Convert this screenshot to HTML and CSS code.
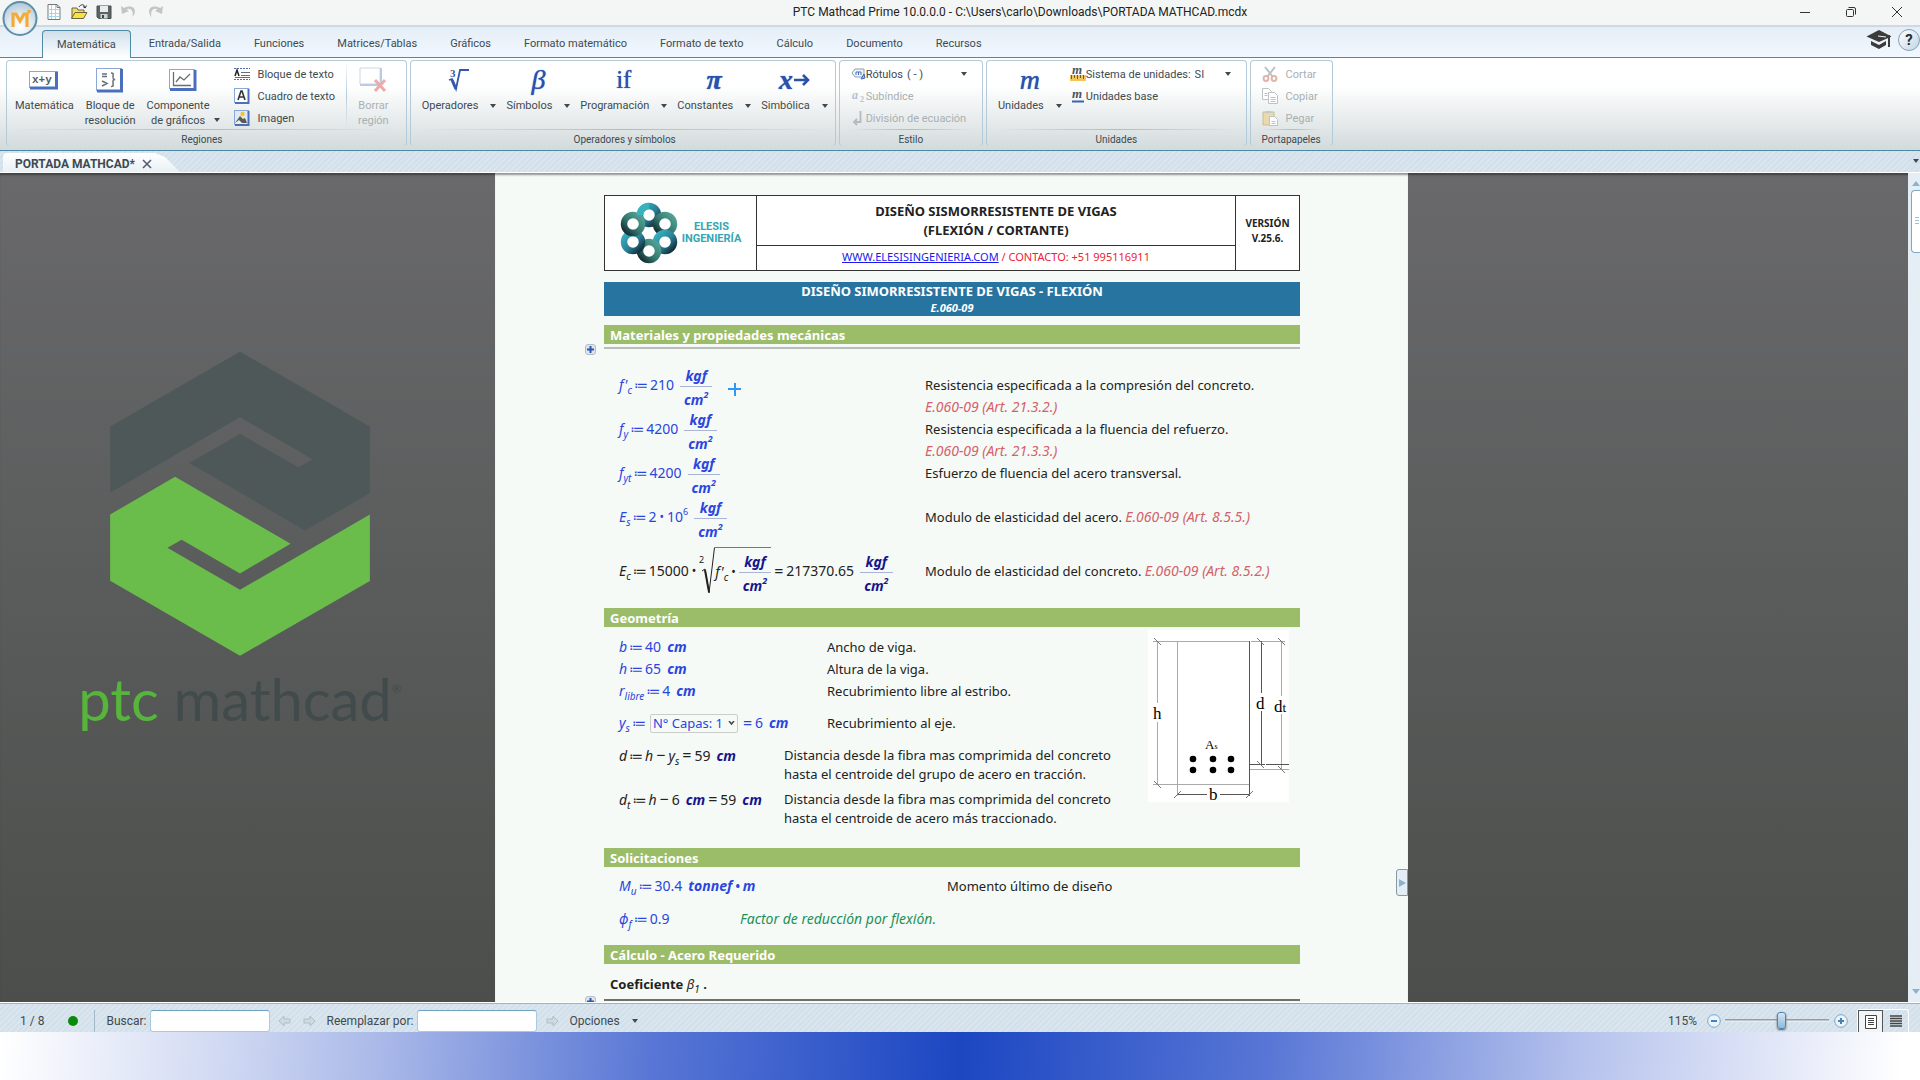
FILE: index.html
```html
<!DOCTYPE html>
<html lang="es">
<head>
  <meta charset="UTF-8">
  <meta name="viewport" content="width=device-width, initial-scale=1.0">
  <title>PTC Mathcad Prime 10.0.0.0</title>
  <link rel="stylesheet" href="styles.css">
</head>
<body>
  <!-- Title bar -->
  <header class="titlebar">
    <button class="orb" aria-label="Mathcad">
      <svg width="36" height="37" viewBox="0 0 36 37">
        <defs>
          <radialGradient id="orbFill" cx="50%" cy="75%" r="80%">
            <stop offset="0" stop-color="#fff"/>
            <stop offset="0.5" stop-color="#dce7ef"/>
            <stop offset="1" stop-color="#a9c2d4"/>
          </radialGradient>
        </defs>
        <circle cx="18" cy="18.500" r="16.500" fill="url(#orbFill)" stroke="#5c8fa9" stroke-width="2"/>
        <path d="M11 27V14h3l4 7 4-7h3v13M27 10v3" fill="none" stroke="#f3ab35" stroke-width="3.200"/>
      </svg>
    </button>
    <div class="quick">
      <button aria-label="Nuevo"><svg width="16" height="18" viewBox="0 0 16 18"><path d="M2 1.500h9l3 3v12H2z" fill="#fff" stroke="#6b7a80"/><path d="M5.500 2v14M9.500 2v14M2 6.500h11M2 10.500h11M2 13.500h11" stroke="#a9d4e6"/><path d="M11 1.500v3h3" fill="none" stroke="#6b7a80"/></svg></button>
      <button aria-label="Abrir"><svg width="18" height="18" viewBox="0 0 18 18"><path d="M2 15V5h5l1 2h6v3" fill="#f4dc6a" stroke="#6b6440"/><path d="M1.500 15.500L5 9.500h12l-3.500 6z" fill="#f8e23c" stroke="#6b6440"/><path d="M9 4c2-3 5-3 6 0M13 3.500l2.200 1.500L16.500 2.500" fill="none" stroke="#333"/></svg></button>
      <button aria-label="Guardar"><svg width="16" height="16" viewBox="0 0 16 16"><path d="M1 2h14v12.500H3L1 13z" fill="#5c6464" stroke="#444c4c"/><path d="M4 2h8v6H4z" fill="#e8ecec"/><path d="M4.500 10h7v4.500h-7z" fill="#cdd4d4"/><path d="M6 11h2v3H6z" fill="#444"/></svg></button>
      <button aria-label="Deshacer" disabled><svg width="18" height="16" viewBox="0 0 18 16"><path d="M1 2l1 8 7-3-2.500-1.500C10 3 14 6 12.500 13 18 7 14-1 4 4z" fill="#c0c6c8"/></svg></button>
      <button aria-label="Rehacer" disabled><svg width="18" height="16" viewBox="0 0 18 16"><path d="M17 2l-1 8-7-3 2.500-1.500C8 3 4 6 5.500 13 0 7 4-1 14 4z" fill="#c0c6c8"/></svg></button>
    </div>
    <h1 class="title">PTC Mathcad Prime 10.0.0.0 - C:\Users\carlo\Downloads\PORTADA MATHCAD.mcdx</h1>
    <div class="window-buttons">
      <button aria-label="Minimizar"><svg width="12" height="12" viewBox="0 0 12 12"><path d="M1 6.500h10" stroke="#333"/></svg></button>
      <button aria-label="Restaurar"><svg width="12" height="12" viewBox="0 0 12 12"><g fill="none" stroke="#333"><rect x="1.500" y="3.500" width="7" height="7" rx="1"/><path d="M3.500 1.500h5.500a1.500 1.500 0 0 1 1.500 1.500v5.500"/></g></svg></button>
      <button aria-label="Cerrar"><svg width="12" height="12" viewBox="0 0 12 12"><path d="M1 1l10 10M11 1L1 11" stroke="#333"/></svg></button>
    </div>
  </header>

  <!-- Ribbon tabs -->
  <nav class="tabs">
    <button class="tab active">Matemática</button>
    <button class="tab">Entrada/Salida</button>
    <button class="tab">Funciones</button>
    <button class="tab">Matrices/Tablas</button>
    <button class="tab">Gráficos</button>
    <button class="tab">Formato matemático</button>
    <button class="tab">Formato de texto</button>
    <button class="tab">Cálculo</button>
    <button class="tab">Documento</button>
    <button class="tab">Recursos</button>
    <div class="help">
      <button aria-label="Aprendizaje"><svg width="26" height="21" viewBox="0 0 26 21"><path d="M13 1l12.500 6.500L13 13 .500 7.500z" fill="#3b3b3b"/><path d="M5 12l8 4 7-4v4l-7 4-8-4z" fill="#3b3b3b"/><path d="M12 7h11v11" fill="none" stroke="#3b3b3b" stroke-width="2"/><path d="M12 7l8 1" stroke="#eef4fa"/></svg></button>
      <button class="help-round" aria-label="Ayuda">?</button>
    </div>
  </nav>

  <!-- Ribbon -->
  <div class="ribbon">
    <section class="group regions">
      <div class="group-body">
        <button class="big">
          <span class="icon"><svg width="32" height="20" viewBox="0 0 32 20"><rect x="1.500" y="1.500" width="28" height="16" fill="#fff" stroke="#8ba6d8"/><path d="M28.500 2v16H2" fill="none" stroke="#4a70bd" stroke-width="3"/><text x="4" y="13" class="svg-mono">x+y</text></svg></span>
          <span>Matemática</span>
        </button>
        <button class="big">
          <span class="icon"><svg width="30" height="26" viewBox="0 0 30 26"><rect x="1.500" y="1.500" width="25" height="22" fill="#fff" stroke="#8ba6d8"/><path d="M26.500 2v22H2" fill="none" stroke="#4a70bd" stroke-width="3"/><path d="M7 7h5M7 9.500h5M7 14l5 2.500L7 19M16 6c3 0 2 1 2 4s0 2 2 2.500c-2 .500-2 0-2 3s1 4-2 4" fill="none" stroke="#666f74" stroke-width="1.500"/></svg></span>
          <span>Bloque de<br>resolución</span>
        </button>
        <button class="big">
          <span class="icon"><svg width="30" height="24" viewBox="0 0 30 24"><rect x="1.500" y="1.500" width="25" height="19" fill="#fff" stroke="#8ba6d8"/><path d="M27 2v19.500H2" fill="none" stroke="#4a70bd" stroke-width="3"/><path d="M5.500 4v13.500H23M8 14l4-5 4 3 6-6" fill="none" stroke="#666f74" stroke-width="1.300"/></svg></span>
          <span class="with-arrow"><span>Componente<br>de gráficos</span><i class="arrow low"></i></span>
        </button>
        <div class="list">
          <button class="small"><svg width="16" height="16" viewBox="0 0 16 16"><path d="M0 2.500h16M0 13.500h16" stroke="#4a70bd" stroke-dasharray="2 1"/><path d="M7 6.500h9M7 9.500h9M1 11.500h15" stroke="#666f74"/><path d="M1 10l2-6 2 6" fill="none" stroke="#222" stroke-width="1.500"/></svg>Bloque de texto</button>
          <button class="small"><svg width="16" height="16" viewBox="0 0 16 16"><rect x=".500" y=".500" width="14" height="14" fill="#fff" stroke="#8ba6d8"/><path d="M14.500 1v14H1" fill="none" stroke="#4a70bd" stroke-width="2"/><path d="M4 12l3-9h1l3 9M5 9h5" fill="none" stroke="#333" stroke-width="1.600"/></svg>Cuadro de texto</button>
          <button class="small"><svg width="16" height="16" viewBox="0 0 16 16"><rect x=".500" y=".500" width="14" height="14" fill="#dfe9f7" stroke="#8ba6d8"/><path d="M14.500 1v14H1" fill="none" stroke="#4a70bd" stroke-width="2"/><path d="M1 13l5-7 3 3 2-1 2 5z" fill="#5c5a4c"/><path d="M1 13l4-3 3 3z" fill="#eee"/><circle cx="8.500" cy="4" r="2.200" fill="#f4c62a"/></svg>Imagen</button>
        </div>
        <div class="separator"></div>
        <button class="big" disabled>
          <span class="icon"><svg width="30" height="28" viewBox="0 0 30 28"><path d="M2 2h20v16H2z" fill="#fff" stroke="#ccd6e6"/><path d="M23 2v17H2" fill="none" stroke="#bccae2" stroke-width="2"/><path d="M17 14l10 11M27 14L17 25" stroke="#eea9a9" stroke-width="3"/></svg></span>
          <span>Borrar<br>región</span>
        </button>
      </div>
      <h2 class="group-title">Regiones</h2>
    </section>

    <section class="group symbols">
      <div class="group-body">
        <button class="big">
          <span class="icon"><svg width="26" height="26" viewBox="0 0 26 26"><path d="M3 13l3-1 4 10L14 3h9" fill="none" stroke="#3159ae" stroke-width="1.800"/><path d="M6 13l4 9" stroke="#3159ae" stroke-width="3"/><text x="4" y="10" class="svg-three">3</text></svg></span>
          <span class="with-arrow">Operadores<i class="arrow"></i></span>
        </button>
        <button class="big"><span class="icon glyph">β</span><span class="with-arrow">Símbolos<i class="arrow"></i></span></button>
        <button class="big"><span class="icon glyph upright">if</span><span class="with-arrow">Programación<i class="arrow"></i></span></button>
        <button class="big"><span class="icon glyph heavy">π</span><span class="with-arrow">Constantes<i class="arrow"></i></span></button>
        <button class="big"><span class="icon glyph heavy">x<svg width="17" height="14" viewBox="0 0 17 14"><path d="M1 7h13M10 2l5 5-5 5" fill="none" stroke="#2a50a8" stroke-width="2.600"/></svg></span><span class="with-arrow">Simbólica<i class="arrow"></i></span></button>
      </div>
      <h2 class="group-title">Operadores y símbolos</h2>
    </section>

    <section class="group">
      <div class="group-body">
        <div class="list tight">
          <label class="small"><svg width="15" height="14" viewBox="0 0 15 14"><path d="M1 6l3-4h9v8H4z" fill="#eef3f8" stroke="#8ca0b8"/><path d="M5 8V5h5v3M7.500 5v3" fill="none" stroke="#4a70bd"/><path d="M10 12l4-1-1-4z" fill="#e9b93d" stroke="#3c66b4"/></svg>Rótulos
            <select class="combo wide"><option>( - )</option></select>
          </label>
          <button class="small" disabled><svg width="15" height="14" viewBox="0 0 15 14"><text x="1" y="10" class="svg-sub">a</text><text x="9" y="13" class="svg-sub2">2</text></svg>Subíndice</button>
          <button class="small" disabled><svg width="15" height="14" viewBox="0 0 15 14"><path d="M9.500 0v11H3M6 8l-3 3 3 3" fill="none" stroke="#b4babd" stroke-width="1.800"/></svg>División de ecuación</button>
        </div>
      </div>
      <h2 class="group-title">Estilo</h2>
    </section>

    <section class="group">
      <div class="group-body">
        <button class="big"><span class="icon glyph">m</span><span class="with-arrow">Unidades<i class="arrow"></i></span></button>
        <div class="list tight">
          <label class="small"><svg width="16" height="15" viewBox="0 0 16 15"><text x="2" y="7" class="svg-m">m</text><path d="M0 8h16v6H0z" fill="#f2c45a"/><path d="M1.500 8v4M4.500 8v3M7.500 8v4M10.500 8v3M13.500 8v4" stroke="#6b5a2a"/></svg>Sistema de unidades:
            <select class="combo"><option>SI</option></select>
          </label>
          <button class="small"><svg width="16" height="14" viewBox="0 0 16 14"><text x="2" y="9" class="svg-m">m</text><path d="M2 12.500h12" stroke="#3a62b4" stroke-width="2"/></svg>Unidades base</button>
        </div>
      </div>
      <h2 class="group-title">Unidades</h2>
    </section>

    <section class="group clipboard">
      <div class="group-body">
        <div class="list">
          <button class="small" disabled><svg width="16" height="16" viewBox="0 0 16 16"><path d="M3 1l8 10M13 1L5 11" stroke="#b9c0c4" stroke-width="2"/><g fill="none" stroke="#e4b3a8" stroke-width="2"><circle cx="4" cy="12.500" r="2.400"/><circle cx="12" cy="12.500" r="2.400"/></g></svg>Cortar</button>
          <button class="small" disabled><svg width="16" height="16" viewBox="0 0 16 16"><g fill="#fff" stroke="#bcc2c5"><path d="M.500 .500h6l3 3v8h-9z"/><path d="M6.500 4.500h6l3 3v8h-9z"/><path d="M8.500 9.500h5M8.500 11.500h5M8.500 13.500h5M2.500 5.500h3M2.500 7.500h3"/></g></svg>Copiar</button>
          <button class="small" disabled><svg width="16" height="16" viewBox="0 0 16 16"><path d="M1 2h11v13H1z" fill="#e9d9ae" stroke="#cbbd97"/><path d="M4 3V1h5v2z" fill="#c3c8ca"/><path d="M7.500 6.500h5l3 3v6h-8z" fill="#fff" stroke="#bcc2c5"/><path d="M9.500 11.500h4M9.500 13.500h4" stroke="#bcc2c5"/></svg>Pegar</button>
        </div>
      </div>
      <h2 class="group-title">Portapapeles</h2>
    </section>
  </div>

  <!-- Open documents -->
  <div class="doc-tabs">
    <div class="doc-tab">PORTADA MATHCAD* <button aria-label="Cerrar documento"><svg width="10" height="10" viewBox="0 0 10 10"><path d="M1 1l8 8M9 1L1 9" stroke="#5b5b70" stroke-width="1.600"/></svg></button></div>
    <i class="arrow list-arrow"></i>
  </div>

  <!-- Workspace -->
  <main class="workspace">
    <div class="backdrop">
      <svg width="260" height="305" viewBox="150 62 780 916">
        <path d="M150 289L540 64l390 225v200L735 601 388 398l152-87 176 101 42-25-218-126L150 488z" fill="#4e5859"/>
        <path d="M150 553l195-113 347 201-152 89-175-101-43 24 218 126 390-226v200L540 977 150 752z" fill="#6bbd4b"/>
      </svg>
      <p class="wordmark"><b>ptc</b> mathcad<sup>®</sup></p>
    </div>

    <article class="sheet">
      <table class="head-table">
        <tr>
          <td rowspan="2" class="head-logo">
            <div class="company">
              <svg width="58" height="62" viewBox="-29 -31 58 62">
                <defs>
                  <linearGradient id="teal" x1="0" y1="0" x2="1" y2="1">
                    <stop offset="0" stop-color="#37b3bf"/>
                    <stop offset="0.550" stop-color="#2a7f97"/>
                    <stop offset="1" stop-color="#10262f"/>
                  </linearGradient>
                  <linearGradient id="green" x1="1" y1="0" x2="0" y2="1">
                    <stop offset="0" stop-color="#56a596"/>
                    <stop offset="0.550" stop-color="#33786f"/>
                    <stop offset="1" stop-color="#10262f"/>
                  </linearGradient>
                </defs>
                <g fill="none" stroke-width="6.500">
                  <circle cx="0" cy="-18" r="9" stroke="url(#teal)"/>
                  <circle cx="16" cy="-9" r="9" stroke="url(#green)"/>
                  <circle cx="16" cy="9" r="9" stroke="url(#teal)"/>
                  <circle cx="0" cy="18" r="9" stroke="url(#green)"/>
                  <circle cx="-16" cy="9" r="9" stroke="url(#teal)"/>
                  <circle cx="-16" cy="-9" r="9" stroke="url(#green)"/>
                  <path d="M-9-18a9 9 0 0 1 9-9" stroke="#37b3bf"/>
                </g>
              </svg>
              <span>ELESIS<br>INGENIERÍA</span>
            </div>
          </td>
          <td class="head-title">DISEÑO SISMORRESISTENTE DE VIGAS<br>(FLEXIÓN / CORTANTE)</td>
          <td rowspan="2" class="head-version">VERSIÓN<br>V.25.6.</td>
        </tr>
        <tr>
          <td class="head-contact"><a href="#">WWW.ELESISINGENIERIA.COM</a> / CONTACTO: +51 995116911</td>
        </tr>
      </table>

      <div class="banner">DISEÑO SIMORRESISTENTE DE VIGAS - FLEXIÓN<em>E.060-09</em></div>

      <section class="block">
        <h3>Materiales y propiedades mecánicas</h3>
        <div class="area"><button class="toggle" aria-label="Contraer área"><svg width="9" height="9" viewBox="0 0 9 9"><path d="M1 4.500h7M4.500 1v7" stroke="#2f56b0" stroke-width="2"/></svg></button></div>
        <div class="row tall materials">
          <div class="math input"><i>f'<sub>c</sub></i><span class="op">≔</span>210<span class="frac"><b>kgf</b><b>cm<sup>2</sup></b></span><span class="cursor"></span></div>
          <p>Resistencia especificada a la compresión del concreto.<br><em>E.060-09 (Art. 21.3.2.)</em></p>
        </div>
        <div class="row tall materials">
          <div class="math input"><i>f<sub>y</sub></i><span class="op">≔</span>4200<span class="frac"><b>kgf</b><b>cm<sup>2</sup></b></span></div>
          <p>Resistencia especificada a la fluencia del refuerzo.<br><em>E.060-09 (Art. 21.3.3.)</em></p>
        </div>
        <div class="row tall materials">
          <div class="math input"><i>f<sub>yt</sub></i><span class="op">≔</span>4200<span class="frac"><b>kgf</b><b>cm<sup>2</sup></b></span></div>
          <p>Esfuerzo de fluencia del acero transversal.</p>
        </div>
        <div class="row tall materials">
          <div class="math input"><i>E<sub>s</sub></i><span class="op">≔</span>2<span class="dot">•</span><span>10<sup>6</sup></span><span class="frac"><b>kgf</b><b>cm<sup>2</sup></b></span></div>
          <p>Modulo de elasticidad del acero. <em>E.060-09 (Art. 8.5.5.)</em></p>
        </div>
        <div class="row taller materials">
          <div class="math"><i>E<sub>c</sub></i><span class="op">≔</span>15000<span class="dot">•</span><span class="root"><svg width="16" height="48" viewBox="0 0 16 48"><path d="M3 24l3-2 4 24L15.500 .500" fill="none" stroke="#222"/><path d="M6 23l4 22" stroke="#222" stroke-width="2"/><text x="0" y="16" class="svg-index">2</text></svg><span class="radicand"><i>f'<sub>c</sub></i><span class="dot">•</span><span class="frac flush"><b>kgf</b><b>cm<sup>2</sup></b></span></span></span><span class="op eq">=</span>217370.65<span class="frac"><b>kgf</b><b>cm<sup>2</sup></b></span></div>
          <p>Modulo de elasticidad del concreto. <em>E.060-09 (Art. 8.5.2.)</em></p>
        </div>
      </section>

      <section class="block geometry">
        <h3>Geometría</h3>
        <div class="split">
          <div class="rows">
            <div class="row geo"><div class="math input"><i>b</i><span class="op">≔</span>40<b class="unit">cm</b></div><p>Ancho de viga.</p></div>
            <div class="row geo"><div class="math input"><i>h</i><span class="op">≔</span>65<b class="unit">cm</b></div><p>Altura de la viga.</p></div>
            <div class="row geo"><div class="math input"><i>r<sub>libre</sub></i><span class="op">≔</span>4<b class="unit">cm</b></div><p>Recubrimiento libre al estribo.</p></div>
            <div class="row geo middle">
              <div class="math input"><i>y<sub>s</sub></i><span class="op">≔</span><select class="layers" aria-label="Capas"><option>N° Capas: 1</option></select><span class="op eq">=</span>6<b class="unit">cm</b></div>
              <p>Recubrimiento al eje.</p>
            </div>
            <div class="row dist"><div class="math"><i>d</i><span class="op">≔</span><i>h</i><span class="op eq">−</span><i>y<sub>s</sub></i><span class="op eq">=</span>59<b class="unit">cm</b></div><p>Distancia desde la fibra mas comprimida del concreto<br>hasta el centroide del grupo de acero en tracción.</p></div>
            <div class="row dist"><div class="math"><i>d<sub>t</sub></i><span class="op">≔</span><i>h</i><span class="op eq">−</span>6<b class="unit">cm</b><span class="op eq">=</span>59<b class="unit">cm</b></div><p>Distancia desde la fibra mas comprimida del concreto<br>hasta el centroide de acero más traccionado.</p></div>
          </div>
          <svg class="beam" width="141" height="172" viewBox="0 0 141 172">
            <path fill="#fff" d="M0 0h141v172H0z"/>
            <g fill="none" stroke="#aaa">
              <path d="M9.500 11v62M9.500 92v62M5 11.500h24M5 154.500h24M29.500 11.500v154M29 11.500h72M29 154.500h72"/>
              <path d="M103 11.500h34M133.500 11v55M133.500 84v56M102 139.500h39"/>
              <path stroke="#555" d="M101.500 11v155M113.500 11v52M113.500 81v54M102 134.500h15M118 134.500h23M29 164.500h30M72 164.500h29" />
              <path stroke="#777" d="M6 8l7 7M6 151l7 7M109 8l7 7M130 8l7 7M109 131l7 7M130 136l7 7M26 168l7-7M98 168l7-7"/>
            </g>
            <g>
              <circle cx="45" cy="129" r="3.300"/><circle cx="65" cy="129" r="3.300"/><circle cx="83" cy="129" r="3.300"/>
              <circle cx="45" cy="140" r="3.300"/><circle cx="65" cy="140" r="3.300"/><circle cx="83" cy="140" r="3.300"/>
            </g>
            <text x="5" y="89" class="dim">h</text>
            <text x="108" y="79" class="dim">d</text>
            <text x="126" y="82" class="dim">d<tspan class="dim-sub">t</tspan></text>
            <text x="57" y="119" class="bars">A<tspan class="bars-sub">s</tspan></text>
            <text x="61" y="170" class="dim">b</text>
          </svg>
        </div>
      </section>

      <section class="block loads">
        <h3>Solicitaciones</h3>
        <div class="row moment"><div class="math input"><i>M<sub>u</sub></i><span class="op">≔</span>30.4<b class="unit">tonnef<span class="dot">•</span>m</b></div><p>Momento último de diseño</p></div>
        <div class="row factor"><div class="math input"><i>ϕ<sub>f</sub></i><span class="op">≔</span>0.9</div><p class="note">Factor de reducción por flexión.</p></div>
      </section>

      <section class="block">
        <h3>Cálculo - Acero Requerido</h3>
        <p class="coef"><b>Coeficiente</b> <i>β<sub>1</sub></i> <b>.</b></p>
        <div class="area dark"><button class="toggle" aria-label="Contraer área"><svg width="9" height="9" viewBox="0 0 9 9"><path d="M1 4.500h7M4.500 1v7" stroke="#2f56b0" stroke-width="2"/></svg></button></div>
      </section>

      <button class="drawer" aria-label="Mostrar borrador"><svg width="7" height="8" viewBox="0 0 7 8"><path d="M0 0l7 4-7 4z" fill="#8ab4cc"/></svg></button>
    </article>

    <div class="margin"></div>
    <div class="scrollbar">
      <svg width="8" height="5" viewBox="0 0 8 5"><path d="M0 5l4-5 4 5z" fill="#8ab4cc"/></svg>
      <div class="thumb"></div>
      <svg width="8" height="5" viewBox="0 0 8 5"><path d="M0 0l4 5 4-5z" fill="#8ab4cc"/></svg>
    </div>
  </main>

  <!-- Status bar -->
  <footer class="statusbar">
    <span class="pages">1 / 8</span>
    <span class="status-dot"></span>
    <span class="bar-line"></span>
    <label for="find">Buscar:</label>
    <input type="text" id="find">
    <button disabled aria-label="Anterior"><svg width="14" height="12" viewBox="0 0 14 12"><path d="M1 6l5-5v3h6v4H6v3z" fill="#d0d9df" stroke="#b3bec5"/></svg></button>
    <button disabled aria-label="Siguiente"><svg width="14" height="12" viewBox="0 0 14 12"><path d="M13 6L8 1v3H2v4h6v3z" fill="#d0d9df" stroke="#b3bec5"/></svg></button>
    <label for="replace">Reemplazar por:</label>
    <input type="text" id="replace">
    <button disabled aria-label="Reemplazar"><svg width="14" height="12" viewBox="0 0 14 12"><path d="M13 6L8 1v3H2v4h6v3z" fill="#d0d9df" stroke="#b3bec5"/></svg></button>
    <button class="options with-arrow">Opciones<i class="arrow"></i></button>
    <div class="zoom">
      <label for="zoom">115%</label>
      <button class="round" aria-label="Alejar"><svg width="14" height="14" viewBox="0 0 14 14"><circle cx="7" cy="7" r="6.300" fill="#eaf3fa" stroke="#7da7c8"/><path d="M4 7h6" stroke="#4682b4" stroke-width="2"/></svg></button>
      <input type="range" id="zoom" min="0" max="100" value="55">
      <button class="round" aria-label="Acercar"><svg width="14" height="14" viewBox="0 0 14 14"><circle cx="7" cy="7" r="6.300" fill="#eaf3fa" stroke="#7da7c8"/><path d="M4 7h6M7 4v6" stroke="#4682b4" stroke-width="2"/></svg></button>
      <div class="views">
        <button class="on" aria-label="Vista de página"><svg width="12" height="14" viewBox="0 0 12 14"><path d="M.500 .500h11v13H.500z" fill="#fff" stroke="#444"/><path d="M3 3.500h6M3 5.500h6M3 7.500h6M3 9.500h6" stroke="#444"/></svg></button>
        <button aria-label="Vista de borrador"><svg width="12" height="12" viewBox="0 0 12 12"><path d="M0 1h12M0 3.500h12M0 6h12M0 8.500h12M0 11h12" stroke="#444" stroke-width="1.400"/></svg></button>
      </div>
    </div>
  </footer>
  <div class="desktop"></div>
</body>
</html>
```
FILE: styles.css
```css
* {
  box-sizing: border-box;
}

body {
  margin: 0;
  height: 100vh;
  display: flex;
  flex-direction: column;
  overflow: hidden;
  font-family: Roboto, "Open Sans", sans-serif;
  font-size: 11px;
  color: #3d4a50;
  background: #fff;
}

button {
  font: inherit;
  color: inherit;
  background: none;
  border: 0;
  padding: 0;
}

svg {
  flex: none;
  display: block;
  overflow: visible;
}

h1, h2, h3, p {
  margin: 0;
  font-weight: normal;
}

/* Title bar */
.titlebar {
  display: flex;
  align-items: center;
  height: 27px;
  padding-bottom: 2px;
  background: #f4f6f5;
  border-bottom: 2px solid #cfd9e4;
}

.orb {
  align-self: flex-start;
  margin: 0 10px 0 2px;
  height: 25px;
  z-index: 2;
}

.quick {
  display: flex;
  align-items: center;
  gap: 8px;
  margin-left: -2px;
}

.title {
  flex: 1;
  padding-left: 94px;
  text-align: center;
  font-size: 12px;
  color: #222;
}

.window-buttons {
  display: flex;
}

.window-buttons button {
  width: 46px;
  display: flex;
  justify-content: center;
}

/* Tabs */
.tabs {
  display: flex;
  align-items: flex-end;
  gap: 3px;
  height: 31px;
  padding-left: 42px;
  background: linear-gradient(#e5edf6, #f1f8ff);
  border-bottom: 1px solid #4f89a5;
}

.tab {
  height: 28px;
  padding: 0 14px;
  border: 1px solid transparent;
}

.tab.active {
  margin-bottom: -1px;
  border-color: #4f89a5;
  border-bottom: 0;
  border-radius: 4px 4px 0 0;
  background: linear-gradient(#cfdfea, #fff);
}

.help {
  margin-left: auto;
  align-self: center;
  display: flex;
  align-items: center;
  gap: 6px;
  padding-bottom: 5px;
}

.help-round {
  width: 22px;
  height: 22px;
  border: 1px solid #7fa3ba;
  border-radius: 50%;
  background: linear-gradient(135deg, #fff, #c3d5e2);
  font-weight: bold;
  font-size: 15px;
  color: #22303a;
}

/* Ribbon */
.ribbon {
  display: flex;
  gap: 3px;
  height: 93px;
  padding: 2px 6px 4px;
  background: linear-gradient(#fff 30%, #d2dadb);
  border-bottom: 1px solid #4f89a5;
}

.group {
  display: flex;
  flex-direction: column;
  padding: 0 11px;
  border: 1px solid #b4cad9;
  border-bottom: 0;
  border-radius: 4px;
}

.group.regions {
  padding: 0 17px 0 8px;
}

.group.symbols {
  padding: 0 7px 0 11px;
}

.group-body {
  flex: 1;
  display: flex;
  gap: 8px;
}

.regions .group-body {
  gap: 11px;
}

.regions .list {
  margin-left: 3px;
}

.symbols .group-body {
  gap: 10px;
}

.group-title {
  padding-top: 3px;
  line-height: 13px;
  font-size: 10px;
  text-align: center;
  border-top: 1px solid #fff;
  border-image: linear-gradient(90deg, transparent, #b3bbbe, transparent) 1;
}

.big {
  display: flex;
  flex-direction: column;
  align-items: center;
  line-height: 15px;
}

.icon {
  height: 37px;
  display: flex;
  align-items: center;
}

.glyph {
  font-family: "Liberation Serif", serif;
  font-style: italic;
  font-size: 28px;
  color: #2a52ac;
  text-shadow: 0 0 1px #2a52ac;
}

.glyph.heavy {
  font-weight: bold;
}

.glyph.upright {
  font-style: normal;
  font-size: 25px;
}

.with-arrow {
  display: flex;
  align-items: center;
  gap: 12px;
}

.arrow {
  border: 3px solid transparent;
  border-top: 4px solid #3d4a50;
  border-bottom: 0;
}

.arrow.low {
  margin: 14px 0 0 -8px;
}

.list {
  display: flex;
  flex-direction: column;
  padding-top: 2px;
}

.small {
  display: flex;
  align-items: center;
  gap: 8px;
  height: 22px;
}

.tight .small {
  gap: 0;
}

:disabled {
  color: #a9b0b3;
}

.separator {
  width: 1px;
  background: linear-gradient(transparent, #b4cad9, transparent);
}

.combo {
  appearance: none;
  width: 36px;
  margin: 0 4px;
  padding: 0;
  border: 0;
  font: inherit;
  color: inherit;
  background: url("data:image/svg+xml,%3Csvg xmlns='http://www.w3.org/2000/svg' width='6' height='4'%3E%3Cpath d='M0 0h6L3 4z' fill='%233d4a50'/%3E%3C/svg%3E") no-repeat 100% 50%;
}

.combo.wide {
  width: 60px;
}

.svg-mono { font: bold 11px "Liberation Mono", monospace; fill: #555e63; }
.svg-three { font: bold 11px "Liberation Serif", serif; fill: #3159ae; }
.svg-sub { font: italic bold 12px "Liberation Serif", serif; fill: #b5c0d2; }
.svg-sub2 { font: bold 8px "Liberation Serif", serif; fill: #b5c0d2; }
.svg-m { font: italic bold 13px "Liberation Serif", serif; fill: #4a5458; }
.svg-index { font: 9px "Noto Sans", sans-serif; fill: #222; }

/* Document tabs */
.doc-tabs {
  display: flex;
  align-items: flex-end;
  justify-content: space-between;
  height: 22px;
  padding-left: 3px;
  border-bottom: 1px solid #fff;
  background: repeating-linear-gradient(135deg, #d3e0ea 0 2px, #dae6ef 2px 4px);
}

.doc-tab {
  display: flex;
  align-items: center;
  gap: 7px;
  height: 19px;
  padding: 2px 28px 0 12px;
  font-weight: bold;
  font-size: 12px;
  background: linear-gradient(#fff, #e9f0f5);
  border-radius: 4px 0 0 0;
  clip-path: polygon(0 0, 152px 0, 162px 4px, 100% 100%, 0 100%);
}

.list-arrow {
  margin: 0 1px 9px 0;
}

/* Workspace */
.workspace {
  flex: 1;
  min-height: 0;
  display: flex;
  background: linear-gradient(#69696b, #4b4e4b);
  box-shadow: inset 0 3px 2px -1px rgba(40, 40, 40, 0.6);
}

.backdrop {
  flex: 1;
  display: flex;
  flex-direction: column;
  align-items: center;
  padding: 178px 15px 0 0;
}

.wordmark {
  margin-top: 8px;
  font-family: Lato, sans-serif;
  font-size: 58px;
  line-height: 70px;
  color: #424b4c;
  white-space: nowrap;
}

.wordmark b {
  font-weight: normal;
  color: #57b53b;
}

.wordmark sup {
  font-size: 12px;
  vertical-align: 28px;
  line-height: 0;
}

.margin {
  flex: 1;
  padding-left: 15px;
}

.scrollbar {
  display: flex;
  flex-direction: column;
  align-items: center;
  width: 12px;
  padding: 8px 0 8px 3px;
  background: #e6eef5;
}

.thumb {
  align-self: stretch;
  height: 63px;
  margin: 4px 0 auto;
  border: 1px solid #7fa9c2;
  border-right: 0;
  border-radius: 4px 0 0 4px;
  background: repeating-linear-gradient(#9cc3d6 0 1px, #fff 1px 3px) no-repeat 3px 50% / 4px 9px #fff;
}

/* Worksheet */
.sheet {
  flex: 0 1 913px;
  position: relative;
  margin-right: 5px;
  padding: 22px 108px 0 109px;
  overflow: hidden;
  background: #f5faf6;
  box-shadow: inset 0 3px 2px -1px rgba(80, 80, 80, 0.6);
  font-family: "Noto Sans", "DejaVu Sans", sans-serif;
  font-size: 13px;
  line-height: 22px;
  color: #222;
}

.head-table {
  width: 100%;
  height: 76px;
  border-collapse: collapse;
  background: #fff;
  text-align: center;
  font-weight: bold;
}

.head-table td {
  padding: 0;
  border: 1px solid #333;
}

.head-logo {
  width: 152px;
}

.company {
  display: flex;
  align-items: center;
  justify-content: center;
  gap: 4px;
  line-height: 12px;
  font-family: Roboto, sans-serif;
  font-size: 11px;
  color: #35a6b4;
}

.head-title {
  line-height: 19px;
}

.head-table .head-version {
  width: 64px;
  padding-bottom: 4px;
  font-size: 10px;
  line-height: 15px;
}

.head-table .head-contact {
  height: 25px;
  padding-bottom: 3px;
  font-size: 11px;
  line-height: 20px;
  font-weight: normal;
  color: #ee2233;
}

.head-contact a {
  color: #1a1aee;
}

.banner {
  margin-top: 11px;
  height: 34px;
  background: #2874a1;
  color: #fff;
  font-weight: bold;
  line-height: 19px;
  text-align: center;
}

.banner em {
  display: block;
  font-size: 11px;
  line-height: 14px;
}

.block {
  margin-top: 9px;
}

.block h3 {
  height: 19px;
  padding-left: 6px;
  background: #9bbd69;
  color: #fff;
  font-size: 13px;
  font-weight: bold;
  line-height: 20px;
}

.area {
  height: 2px;
  margin: 3px 0 14px;
  background: #b9bdba;
}

.area.dark {
  margin-top: 4px;
  background: #6d716e;
}

.toggle {
  position: absolute;
  left: 90px;
  margin-top: -3px;
  width: 11px;
  height: 11px;
  border: 1px solid #b5bdc8;
  border-radius: 3px;
  background: #dfe4ee;
}

.row {
  display: grid;
  height: 22px;
  padding-left: 15px;
}

.row p {
  white-space: nowrap;
}

.row em {
  font-size: 14px;
  color: #d4606a;
}

.materials { grid-template-columns: 306px 1fr; }
.geo { grid-template-columns: 208px 1fr; }
.dist { grid-template-columns: 165px 1fr; }
.moment { grid-template-columns: 328px 1fr; }
.factor { grid-template-columns: 121px 1fr; }

.row.tall {
  height: 44px;
  grid-template-rows: 44px;
  align-items: center;
}

.row.tall p {
  align-self: start;
  padding-top: 11px;
}

.row.taller {
  height: 62px;
}

.row.taller p {
  padding-top: 21px;
}

.row.taller .math {
  padding-top: 2px;
}

.row.middle {
  height: 42px;
  align-items: center;
}

.row.dist {
  height: 44px;
  padding-top: 2px;
  line-height: 19px;
}

.dist .math {
  height: 19px;
}

.math {
  display: flex;
  align-items: center;
  font-size: 14px;
  white-space: nowrap;
}

.math.input,
.math.input b {
  color: #2a45e0;
}

.math b {
  font-style: italic;
  color: #14148c;
}

.math sub,
.coef sub {
  font-size: 10px;
  line-height: 0;
  vertical-align: -4px;
}

.math sup {
  font-size: 9px;
  line-height: 0;
  vertical-align: 7px;
}

.op {
  margin: 0 2px;
}

.op.eq {
  margin: 0 3px;
  font-size: 16px;
}

.dot {
  margin: 0 3px;
  font-size: 12px;
}

.unit {
  margin-left: 6px;
}

.frac {
  display: flex;
  flex-direction: column;
  align-items: center;
  margin-left: 6px;
  padding-top: 8px;
}

.frac.flush {
  margin-left: 0;
}

.frac b {
  line-height: 20px;
}

.frac b + b {
  border-top: 1px solid #a9b4d8;
  padding: 0 4px;
  line-height: 26px;
}

.root {
  display: flex;
  align-items: center;
  height: 48px;
}

.radicand {
  display: flex;
  align-items: center;
  height: 48px;
  border-top: 1px solid #777;
}

.cursor {
  width: 13px;
  height: 13px;
  margin: 8px 0 0 16px;
  background:
    linear-gradient(#2f97f5, #2f97f5) 50% 50% / 13px 2px no-repeat,
    linear-gradient(#2f97f5, #2f97f5) 50% 50% / 2px 13px no-repeat;
}

.geometry {
  margin-top: 7px;
}

.split {
  display: flex;
  align-items: flex-start;
  height: 212px;
}

.rows {
  flex: 1;
  padding-top: 9px;
}

.beam {
  margin: 3px 11px 0 0;
}

.dim { font: 17px "Liberation Serif", serif; }
.dim-sub { font-size: 13px; }
.bars { font: 13px "Liberation Serif", serif; }
.bars-sub { font-size: 8px; }

.layers {
  appearance: none;
  width: 88px;
  height: 19px;
  margin: 0 2px;
  padding: 0 2px;
  border: 1px solid #c9cecb;
  border-radius: 2px;
  font: inherit;
  font-size: 13px;
  line-height: 17px;
  color: inherit;
  background: url("data:image/svg+xml,%3Csvg xmlns='http://www.w3.org/2000/svg' width='7' height='5'%3E%3Cpath d='M1 0l2.500 3L6 0' fill='none' stroke='%23444' stroke-width='1.500'/%3E%3C/svg%3E") no-repeat 77px 6px;
}

.row.moment {
  height: 38px;
  align-items: center;
}

.row.factor {
  height: 27px;
  align-items: center;
}

.loads {
  margin-bottom: 13px;
}

.row .note {
  font-style: italic;
  font-size: 14px;
  color: #1d9158;
}

.coef {
  padding: 9px 0 0 6px;
}

.drawer {
  position: absolute;
  right: 0;
  bottom: 106px;
  width: 12px;
  height: 27px;
  padding-left: 2px;
  border: 1px solid #8798a6;
  border-radius: 3px 0 0 3px;
  background: #e6eef5;
}

/* Status bar */
.statusbar {
  display: flex;
  align-items: center;
  height: 30px;
  padding: 6px 0 0 20px;
  border-top: 1px solid #fff;
  box-shadow: inset 0 1px #a9b0b8;
  background: repeating-linear-gradient(135deg, #d3e0ea 0 2px, #dae6ef 2px 4px);
  font-size: 12px;
}

.status-dot {
  width: 10px;
  height: 10px;
  margin: 0 16px 0 24px;
  border-radius: 50%;
  background: #0a8a0a;
}

.bar-line {
  width: 1px;
  height: 22px;
  margin-right: 11px;
  background: #9fb9ca;
}

.statusbar input[type="text"] {
  width: 120px;
  height: 22px;
  margin: 0 8px 0 4px;
  border: 1px solid #a9cbe2;
  border-top-color: #6fa3c2;
  border-radius: 3px;
  background: #fff;
}

.statusbar > button {
  margin-right: 10px;
}

.zoom {
  margin-left: auto;
  display: flex;
  align-items: center;
  padding-right: 11px;
}

.round {
  margin-left: 10px;
}

.zoom input {
  appearance: none;
  width: 104px;
  height: 18px;
  margin: 0 -5px 0 4px;
  background: linear-gradient(#7e8a92, #fff) no-repeat 0 50% / 100% 3px;
}

.zoom input::-webkit-slider-thumb {
  appearance: none;
  width: 9px;
  height: 17px;
  border: 1px solid #5585ad;
  border-radius: 3px;
  background: linear-gradient(#d4e6f4, #8db9dc);
  box-shadow: 0 1px 2px #555;
}

.views {
  display: flex;
  margin-left: 9px;
  border: 1px solid #fff;
  border-bottom: 0;
  border-radius: 3px 3px 0 0;
}

.views button {
  width: 25px;
  height: 22px;
  display: flex;
  align-items: center;
  justify-content: center;
}

.views .on {
  border: 1px solid #555;
  border-bottom: 0;
  background: #f2f5f7;
}

.desktop {
  height: 48px;
  background: linear-gradient(94deg, #fff 0%, #cfd8f2 12%, #a9b8e8 20%, #5876d5 34%, #1c47c2 50%, #5876d5 66%, #b4c1ec 82%, #fff 99%);
}
```
